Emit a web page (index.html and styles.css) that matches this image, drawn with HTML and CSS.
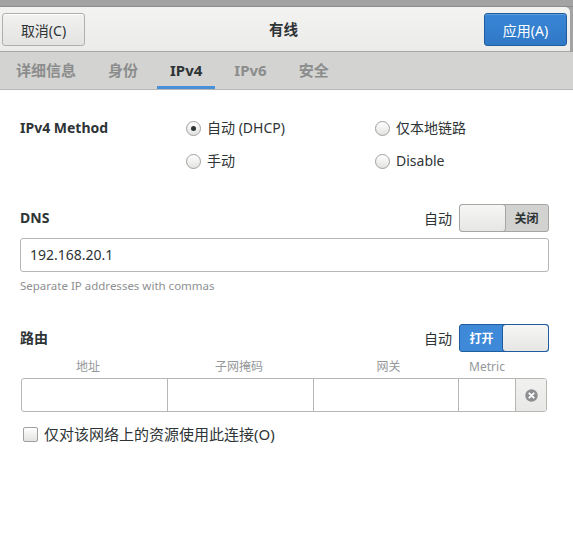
FILE: index.html
```html
<!DOCTYPE html>
<html lang="zh-CN">
<head>
<meta charset="utf-8">
<title>有线</title>
<link rel="stylesheet" href="styles.css">
</head>
<body>
<div class="window">
  <div class="topstrip"></div>
  <div class="header-wrap">
    <div class="headerbar">
      <button class="btn">取消(C)</button>
      <div class="title">有线</div>
      <button class="btn btn-blue">应用(A)</button>
    </div>
  </div>
  <div class="tabs">
    <div class="tab">详细信息</div>
    <div class="tab">身份</div>
    <div class="tab active">IPv4</div>
    <div class="tab">IPv6</div>
    <div class="tab">安全</div>
  </div>
  <div class="content">
    <div class="method">
      <div class="label">IPv4 Method</div>
      <div class="radio-item"><span class="radio checked"></span>自动 (DHCP)</div>
      <div class="radio-item"><span class="radio"></span>仅本地链路</div>
      <div></div>
      <div class="radio-item"><span class="radio"></span>手动</div>
      <div class="radio-item"><span class="radio"></span>Disable</div>
    </div>

    <div class="section-row dns-row">
      <div class="label">DNS</div>
      <div class="auto">
        <span class="auto-text">自动</span>
        <div class="switch off">
          <span class="knob"></span>
          <span class="state">关闭</span>
        </div>
      </div>
    </div>
    <div class="entry">192.168.20.1</div>
    <div class="hint">Separate IP addresses with commas</div>

    <div class="section-row route-row">
      <div class="label">路由</div>
      <div class="auto">
        <span class="auto-text">自动</span>
        <div class="switch on">
          <span class="state">打开</span>
          <span class="knob"></span>
        </div>
      </div>
    </div>
    <div class="route-grid route-head">
      <div class="h-addr">地址</div>
      <div>子网掩码</div>
      <div class="h-gw">网关</div>
      <div class="h-metric">Metric</div>
      <div></div>
    </div>
    <div class="route-grid route-cells">
      <div class="cell"></div>
      <div class="cell"></div>
      <div class="cell"></div>
      <div class="cell"></div>
      <div class="cell del">
        <svg width="13" height="13" viewBox="0 0 13 13">
          <circle cx="6.5" cy="6.5" r="6.2" fill="#8c8e8f"/>
          <path d="M4.3 4.3 L8.7 8.7 M8.7 4.3 L4.3 8.7" stroke="#fff" stroke-width="1.9" stroke-linecap="round"/>
        </svg>
      </div>
    </div>
    <div class="check-item"><span class="checkbox"></span>仅对该网络上的资源使用此连接(O)</div>
  </div>
</div>
</body>
</html>
```

FILE: styles.css
```css
html, body {
  margin: 0;
  padding: 0;
  background: #ffffff;
}
body {
  font-family: "Noto Sans", "Noto Sans CJK SC", sans-serif;
  font-size: 14px;
  color: #2e3436;
  width: 573px;
  height: 543px;
  overflow: hidden;
}
.window {
  display: flex;
  flex-direction: column;
}
.topstrip {
  height: 6px;
  background: #a3a3a3;
  border-bottom: 1px solid #8d8d8d;
}
.header-wrap {
  background: #a3a3a3;
}
.headerbar {
  height: 45px;
  margin-right: 3px;
  display: flex;
  align-items: flex-start;
  justify-content: space-between;
  padding: 6px 3px 0 2px;
  box-sizing: border-box;
  background: linear-gradient(#f3f3f2, #ebebe9);
  border-bottom: 1px solid #a8a8a6;
  border-top-right-radius: 5px;
}
.btn {
  width: 83px;
  height: 33px;
  border: 1px solid #afafad;
  border-radius: 3px;
  background: linear-gradient(#f2f2f1, #e3e3e1);
  font-family: "Noto Sans", "Noto Sans CJK SC", sans-serif;
  font-size: 14px;
  color: #2e3436;
  padding: 0;
  box-shadow: inset 0 1px #fff;
}
.btn-blue {
  background: linear-gradient(#3a86d6, #2f78c6);
  border-color: #1f5c9e;
  color: #ffffff;
  box-shadow: inset 0 1px rgba(255,255,255,0.2);
}
.title {
  font-weight: bold;
  font-size: 14.5px;
  line-height: 33px;
  margin-right: 2px;
}
.tabs {
  height: 37px;
  display: flex;
  background: #d3d3d1;
  border-bottom: 1px solid #b7b7b5;
}
.tab {
  margin: 0 3px;
  padding: 0 13px;
  font-size: 15px;
  font-weight: bold;
  color: #8b8d8d;
  line-height: 37px;
  box-sizing: border-box;
  height: 37px;
}
.tab.active {
  color: #2e3436;
  box-shadow: inset 0 -3px #4a90d9;
}
.content {
  padding: 28px 24px 0 20px;
  display: flex;
  flex-direction: column;
}
.label {
  font-weight: bold;
  line-height: 20px;
}
.method {
  display: grid;
  grid-template-columns: 166px 189px 1fr;
  grid-auto-rows: 20px;
  row-gap: 13px;
}
.radio-item, .check-item {
  display: flex;
  align-items: center;
  line-height: 20px;
}
.radio {
  width: 13px;
  height: 13px;
  border: 1px solid #a0a0a0;
  border-radius: 50%;
  background: linear-gradient(#ffffff, #e2e2e0);
  margin-right: 6px;
  display: flex;
  align-items: center;
  justify-content: center;
  box-sizing: content-box;
}
.radio.checked::after {
  content: "";
  width: 5px;
  height: 5px;
  border-radius: 50%;
  background: #2e3436;
}
.section-row {
  display: flex;
  justify-content: space-between;
  align-items: center;
  height: 28px;
}
.dns-row { margin-top: 33px; }
.route-row { margin-top: 31px; }
.auto {
  display: flex;
  align-items: center;
}
.auto-text {
  margin-right: 7px;
}
.switch {
  width: 90px;
  height: 28px;
  box-sizing: border-box;
  border: 1px solid #a6a6a4;
  border-radius: 3px;
  display: flex;
  overflow: hidden;
  background: #d2d2d0;
}
.switch .knob {
  width: 45px;
  background: linear-gradient(#f6f6f5, #e6e6e4);
  border-radius: 3px;
  box-shadow: 0 0 0 1px #a6a6a4;
}
.switch .state {
  flex: 1;
  display: flex;
  align-items: center;
  justify-content: center;
  font-size: 12px;
  font-weight: bold;
}
.switch.on {
  border-color: #1f5c9e;
  background: #3f8ad8;
}
.switch.on .state {
  color: #ffffff;
}
.switch.on .knob {
  box-shadow: 0 0 0 1px #1f5c9e;
}
.entry {
  margin-top: 6px;
  height: 34px;
  box-sizing: border-box;
  border: 1px solid #b6b6b3;
  border-radius: 3px;
  padding: 0 9px;
  line-height: 32px;
  font-size: 14px;
}
.hint {
  margin-top: 7px;
  font-size: 11.5px;
  line-height: 14px;
  color: #8e9091;
}
.route-grid {
  display: grid;
  grid-template-columns: 145px 146px 145px 57px 1fr;
  margin-left: 1px;
  margin-right: 2px;
}
.route-head {
  margin-top: 8px;
  font-size: 12px;
  line-height: 14px;
  color: #95989a;
  text-align: center;
}
.route-head .h-addr { padding-right: 11px; }
.route-head .h-gw { padding-left: 8px; }
.route-head .h-metric { padding-left: 3px; }
.route-cells {
  margin-top: 4px;
  height: 34px;
  border: 1px solid #b6b6b3;
  border-radius: 3px;
  box-sizing: border-box;
  overflow: hidden;
}
.cell {
  border-left: 1px solid #b6b6b3;
}
.cell:first-child {
  border-left: none;
}
.del {
  background: linear-gradient(#f1f1f0, #e8e8e6);
  display: flex;
  align-items: center;
  justify-content: center;
}
.check-item {
  margin-top: 12px;
  margin-left: 3px;
  font-size: 15px;
}
.checkbox {
  width: 13px;
  height: 13px;
  border: 1px solid #a0a0a0;
  border-radius: 2px;
  background: linear-gradient(#ffffff, #e2e2e0);
  margin-right: 6px;
}
```
